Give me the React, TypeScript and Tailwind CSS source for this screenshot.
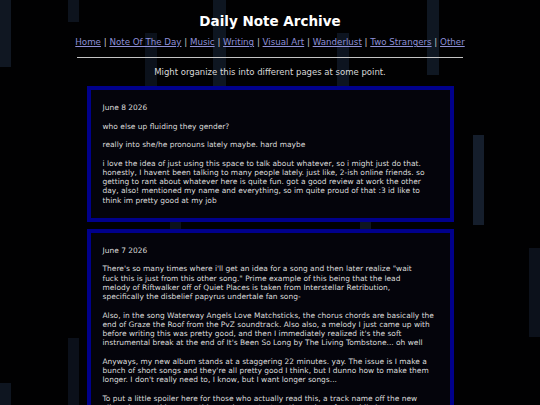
import React from "react";

const bars = [
  { l: 0, t: 0, w: 11, h: 67, c: "bg-[#101722]" },
  { l: 68, t: 0, w: 11, h: 22, c: "bg-[#0d131d]" },
  { l: 68, t: 338, w: 11, h: 67, c: "bg-[#0b101a]" },
  { l: 0, t: 383, w: 11, h: 22, c: "bg-[#0e1520]" },
  { l: 145, t: 33, w: 12, h: 80, c: "bg-[#0b111b]" },
  { l: 213, t: 0, w: 13, h: 90, c: "bg-[#0e1621]" },
  { l: 337, t: 33, w: 12, h: 80, c: "bg-[#0d1420]" },
  { l: 427, t: 0, w: 12, h: 75, c: "bg-[#0f1722]" },
  { l: 473, t: 135, w: 11, h: 90, c: "bg-[#151e2c]" },
  { l: 529, t: 248, w: 11, h: 89, c: "bg-[#0c111b]" },
  { l: 170, t: 215, w: 11, h: 40, c: "bg-[#0c121c]" },
  { l: 360, t: 215, w: 11, h: 40, c: "bg-[#0f1621]" },
];

const links = ["Home", "Note Of The Day", "Music", "Writing", "Visual Art", "Wanderlust", "Two Strangers", "Other"];

function Card({ date, paras }: { date: string; paras: React.ReactNode[] }) {
  return (
    <div className="w-[367px] border-4 border-[#00008b] bg-[#04040b] pl-[12px] pr-[12px] pt-[13px] pb-[13px] text-left text-[7.47px] leading-[9.25px] text-[#dadada]">
      <p className="mb-[9.25px]">{date}</p>
      {paras.map((p, i) => (
        <p key={i} className={i === paras.length - 1 ? "" : "mb-[9.25px]"}>
          {p}
        </p>
      ))}
    </div>
  );
}

export default function App() {
  return (
    <div className="relative min-h-[405px] h-[405px] overflow-hidden bg-[#010102] font-['DejaVu_Sans',sans-serif]">
      {bars.map((b, i) => (
        <div
          key={i}
          className={`absolute ${b.c}`}
          style={{ left: b.l, top: b.t, width: b.w, height: b.h }}
        />
      ))}
      <div className="relative mx-auto flex w-[386px] flex-col items-center pt-[13px] text-center">
        <h1 className="text-[13.5px] font-bold leading-[16px] text-white">Daily Note Archive</h1>
        <nav className="mt-[8px] whitespace-nowrap text-[8.7px] leading-[11px] text-[#c8c8c8]">
          {links.map((l, i) => (
            <React.Fragment key={l}>
              {i > 0 && <span> | </span>}
              <a href="#" className="text-[#8e90d8] underline">{l}</a>
            </React.Fragment>
          ))}
        </nav>
        <div className="mt-[9px] h-px w-full bg-[#c4c4c4]" />
        <p className="mt-[9px] text-[8.5px] leading-[11px] text-[#d8d8d8]">
          Might organize this into different pages at some point.
        </p>
        <div className="mt-[8px] flex flex-col items-center gap-[7px]">
          <Card
            date="June 8 2026"
            paras={[
              "who else up fluiding they gender?",
              "really into she/he pronouns lately maybe. hard maybe",
              "i love the idea of just using this space to talk about whatever, so i might just do that. honestly, I havent been talking to many people lately. just like, 2-ish online friends. so getting to rant about whatever here is quite fun. got a good review at work the other day, also! mentioned my name and everything, so im quite proud of that :3 id like to think im pretty good at my job",
            ]}
          />
          <Card
            date="June 7 2026"
            paras={[
              <>
                There's so many times where i'll get an idea for a song and then later realize "wait
                <br />
                fuck this is just from this other song." Prime example of this being that the lead
                <br />
                melody of Riftwalker off of Quiet Places is taken from Interstellar Retribution,
                <br />
                specifically the disbelief papyrus undertale fan song-
              </>,
              "Also, in the song Waterway Angels Love Matchsticks, the chorus chords are basically the end of Graze the Roof from the PvZ soundtrack. Also also, a melody I just came up with before writing this was pretty good, and then I immediately realized it's the soft instrumental break at the end of It's Been So Long by The Living Tombstone... oh well",
              "Anyways, my new album stands at a staggering 22 minutes. yay. The issue is I make a bunch of short songs and they're all pretty good I think, but I dunno how to make them longer. I don't really need to, I know, but I want longer songs...",
              "To put a little spoiler here for those who actually read this, a track name off the new album is something something and more text continues here for a while longer.",
            ]}
          />
        </div>
      </div>
    </div>
  );
}
